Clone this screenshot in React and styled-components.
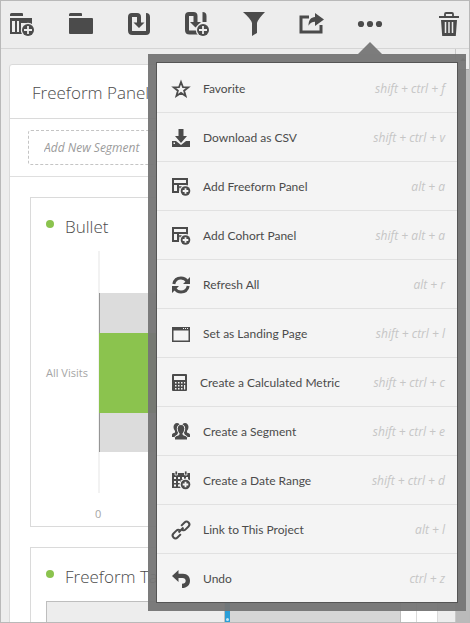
import React from "react";
import styled, { createGlobalStyle } from "styled-components";

const ink = "#4b4b4b";
const sans = '"Open Sans", "Noto Sans", sans-serif';

const Global = createGlobalStyle`
  * { box-sizing: border-box; }
  body { margin: 0; background: #ededed; color: ${ink}; font: 12px/16px ${sans}; }
  button, input { font: inherit; color: inherit; }
  h1, h2 { margin: 0; font-size: 17px; line-height: 24px; font-weight: 300; white-space: nowrap; }
`;

const Window = styled.div`
  position: relative;
  height: 100vh;
  overflow: hidden;
  display: flex;
  flex-direction: column;
  border: 1px solid #b9b9b9;
  background: #ededed;
`;

const Toolbar = styled.header`
  display: flex;
  align-items: center;
  gap: 34px;
  height: 48px;
  flex: none;
  padding: 0 8px 2px 9px;
  border-bottom: 1px solid #d5d5d5;
`;

const ToolButton = styled.button`
  display: flex;
  padding: 0;
  border: 0;
  background: none;
  cursor: pointer;
  margin-left: ${(p) => (p.$end ? "auto" : "0")};
`;

const Icon = styled.svg`
  display: block;
  flex: none;
  fill: ${ink};
`;

const Workspace = styled.main`
  flex: 1;
  min-height: 0;
  display: flex;
`;

const Scroller = styled.div`
  flex: 1;
  min-width: 0;
  overflow: hidden;
  padding: 15px 17px 0 8px;
`;

const ScrollTrack = styled.div`
  width: 14px;
  flex: none;
  display: flex;
  flex-direction: column;
  border-left: 1px solid #c8c8c8;
`;

const ScrollArrow = styled.div`
  height: 21px;
  display: flex;
  align-items: center;
  justify-content: center;
  border-bottom: 1px solid #aaa;
`;

const ScrollThumb = styled.div`
  flex: 1;
  background: #bababa;
`;

const Panel = styled.section`
  border: 1px solid #dadada;
  border-radius: 3px;
  background: #fff;
`;

const PanelHeader = styled.div`
  height: 54px;
  padding: 16px 22px 0;
  border-bottom: 1px solid #dadada;
`;

const SegmentBar = styled.div`
  padding: 11px 18px;
  border-bottom: 1px solid #dfdfdf;
`;

const SegmentInput = styled.input`
  display: block;
  width: 100%;
  height: 35px;
  padding: 0 15px;
  border: 1px dashed #c4c4c4;
  border-radius: 3px;
  background: #fff;
  font-style: italic;
  &::placeholder { color: #9b9b9b; opacity: 1; }
`;

const Cards = styled.div`
  display: flex;
  flex-direction: column;
  gap: 20px;
  padding: 20px;
`;

const Card = styled.article`
  border: 1px solid #dadada;
  padding: 0 15px;
`;

const CardHeader = styled.div`
  display: flex;
  align-items: center;
  gap: 11px;
  height: 53px;
  padding-top: 4px;
`;

const Dot = styled.span`
  width: 8px;
  height: 8px;
  margin-bottom: 5px;
  border-radius: 50%;
  background: #8bc34e;
`;

const Chart = styled.div`
  display: grid;
  grid-template-columns: 52px 1fr;
  color: #a5a5a5;
  font-size: 11px;
`;

const AxisLabel = styled.div`
  align-self: center;
  padding-top: 2px;
`;

const Plot = styled.div`
  height: 242px;
  padding: 42px 0 41px;
  border-left: 2px solid #f2f2f2;
`;

const Range = styled.div`
  height: 100%;
  margin-left: -1px;
  padding: 40px 0 39px;
  border-left: 1px solid #959595;
  background: #dcdcdc;
`;

const Measure = styled.div`
  height: 100%;
  margin-left: -1px;
  background: #8bc34e;
`;

const Tick = styled.div`
  grid-column: 2;
  height: 33px;
  padding-top: 13px;
  margin-left: -3px;
`;

const Grid = styled.div`
  display: flex;
  height: 60px;
  border: 1px solid #bebebe;
  background: #ededed;
`;

const NameColumn = styled.div`
  width: 178px;
  flex: none;
  border-right: 1px solid #bebebe;
`;

const ColumnHandle = styled.div`
  width: 5px;
  flex: none;
  padding: 16px 1px 0;
  background: #2a9fd8;
`;

const Grip = styled.div`
  height: 3px;
  border-radius: 50%;
  background: #c5e6f6;
`;

const ValueColumn = styled.div`
  flex: 1;
  background: #d6d6d6;
`;

const Popover = styled.nav`
  position: absolute;
  top: 53px;
  right: 3px;
  width: 318px;
  border: 8px solid rgba(117, 117, 117, 0.95);
  background: #f4f4f4;
  background-clip: padding-box;
  &::before {
    content: "";
    position: absolute;
    top: -20px;
    left: 202px;
    border: solid transparent;
    border-width: 0 12px 12px;
    border-bottom-color: #7c7c7c;
  }
`;

const Menu = styled.div`
  display: flex;
  flex-direction: column;
  border: 1px solid #555;
`;

const MenuItem = styled.button`
  display: flex;
  align-items: center;
  gap: 13px;
  height: 49px;
  padding: 2px 12px 0 15px;
  border: 0;
  border-top: 1px solid #e1e1e1;
  background: #f4f4f4;
  text-align: left;
  white-space: nowrap;
  cursor: pointer;
  &:first-child { border-top-color: #f4f4f4; }
`;

const Label = styled.span`
  font-family: Lato, ${sans};
`;

const Shortcut = styled.span`
  margin-left: auto;
  color: #c6c6c6;
  font-style: italic;
`;

const Plus = ({ x, y, r, bg }) => (
  <g>
    <circle cx={x} cy={y} r={r + 1.2} fill={bg} />
    <circle cx={x} cy={y} r={r} />
    <path d={`M${x - r + 2} ${y}h${2 * r - 4}M${x} ${y - r + 2}v${2 * r - 4}`} stroke={bg} strokeWidth="1.8" />
  </g>
);

const bar = "#ededed";
const row = "#f4f4f4";

const tools = [
  ["New project from template", <>
    <path d="M0 2.500Q0 1 1.500 1H12q1 0 1 1v2H0zM0 6h22v16H0z" />
    <path d="M2 9h3v11H2zM7 9h2v11H7zM11 11h6v3h-3v6h-3z" fill={bar} />
    <Plus x={18} y={18} r={6} bg={bar} />
  </>],
  ["Open project", <path d="M1 2.500Q1 1 2.500 1H13q1 0 1 1v2H1zM1 6h23q1 0 1 1v14q0 1-1 1H2q-1 0-1-1z" />],
  ["Save", <>
    <path d="M13 12V5q0-2-2-2H6Q4 3 4 5v13.500Q4 21 6.500 21H20q2 0 2-2V5" fill="none" stroke={ink} strokeWidth="4" />
    <path d="M20 1q4 0 4 4h-4zM7.500 10.500H18.500L13 16z" />
  </>],
  ["Save as", <>
    <path d="M11.500 11V4q0-2-2-2H5Q3 2 3 4v14q0 2.500 2.500 2.500H14M20.500 10V4" fill="none" stroke={ink} strokeWidth="4" />
    <path d="M18.500 0q4 0 4 4h-4zM6 10h11l-5.500 5.500z" />
    <Plus x={19} y={18} r={6} bg={bar} />
  </>],
  ["Filter", <path d="M1 0h22q-7 7-8 11v10l-5 3V11Q9 7 1 0z" />],
  ["Share", <>
    <path d="M9 5H1v15h20V13" fill="none" stroke={ink} strokeWidth="3" />
    <path d="M15 1l9 6.500-9 6.500v-4.200c-3 0-5 1.200-6.500 4C8.500 8 11 5.200 15 5z" stroke={bar} strokeWidth="2" paintOrder="stroke" />
  </>],
  ["More", <><circle cx="3" cy="12" r="3.100" /><circle cx="12" cy="12" r="3.100" /><circle cx="21" cy="12" r="3.100" /></>],
  ["Delete", <>
    <path d="M2 4h20v2H2zM4 8h16l-1.200 16H5.200z" />
    <path d="M8 4.500V2q0-1 1-1h6q1 0 1 1v2.500" fill="none" stroke={ink} strokeWidth="1.800" />
    <path d="M8.500 10v11M12 10v11M15.500 10v11" stroke={bar} strokeWidth="1.500" />
  </>],
];

const panelIcon = <>
  <path d="M1 1h14v5H1zM1 6v8h5V6" fill="none" stroke={ink} strokeWidth="2" />
  <path d="M15 5v4M7 9h5M8.500 9v4" fill="none" stroke={ink} strokeWidth="1.500" />
  <Plus x={13.5} y={13} r={4.800} bg={row} />
</>;

const items = [
  ["Favorite", "shift + ctrl + f",
    <path d="M9 2l2 5.200 5.300.2-4.200 3.300 1.500 5.200L9 12.900l-4.600 3 1.500-5.200-4.200-3.300L7 7.200z" fill="none" stroke={ink} strokeWidth="1.800" />],
  ["Download as CSV", "shift + ctrl + v",
    <path d="M6.500 0h5v7H15l-6 7-6-7h3.500zM0 12h4l5 4 5-4h4v6H0zM1.500 13.500v1.500H3v-1.500z" fillRule="evenodd" />],
  ["Add Freeform Panel", "alt + a", panelIcon],
  ["Add Cohort Panel", "shift + alt + a", panelIcon],
  ["Refresh All", "alt + r", <>
    <path d="M1.800 8C2.500 4.500 5.200 2 9 2q4 0 6.300 3.500M16.200 10c-.7 3.500-3.400 6-7.200 6q-4 0-6.300-3.500" fill="none" stroke={ink} strokeWidth="3" />
    <path d="M18 1v7h-7zM0 17v-7h7z" />
  </>],
  ["Set as Landing Page", "shift + ctrl + l", <>
    <path d="M0 2h18v15H0zM1.500 5.500v10h15v-10z" fillRule="evenodd" />
    <path d="M11 3.500h1M13 3.500h1M15 3.500h1" stroke={row} />
  </>],
  ["Create a Calculated Metric", "shift + ctrl + c", <>
    <rect x="0" y="0" width="15" height="17" rx="1" />
    <path d="M2 2h11v4H2z" fill={row} />
    <path d="M3 8h1.500v1.500H3zM6 8h1.500v1.500H6zM9 8h1.500v1.500H9zM3 11h1.500v1.500H3zM6 11h1.500v1.500H6zM9 11h1.500v1.500H9zM3 14h1.500v1.500H3zM6 14h1.500v1.500H6zM9 14h1.500v1.500H9zM12 8h1.200v1.500H12zM12 11h1.200v4.500H12z" fill={row} />
  </>, 15],
  ["Create a Segment", "shift + ctrl + e", <>
    <path d="M5 0c2 0 3 1.300 3 3.200L6 7v3l-2 4H0v-2.500q0-1 3-2V8Q1.500 6.500 1.500 4C1.500 2 3 0 5 0zM13 0c-2 0-3 1.300-3 3.200L12 7v3l2 4h4v-2.500q0-1-3-2V8q1.500-1.500 1.500-4C16.500 2 15 0 13 0z" />
    <path d="M9 1.500c2.500 0 3.700 1.700 3.700 4.200 0 2-.7 3.500-1.700 4.500v1.500q4.500 1 4.500 3V17h-13v-2.300q0-2 4.500-3v-1.500c-1-1-1.700-2.500-1.700-4.500 0-2.500 1.200-4.200 3.700-4.200z" stroke={row} strokeWidth="1" />
  </>],
  ["Create a Date Range", "shift + ctrl + d", <>
    <path d="M0 1h18v15H0z" />
    <path d="M3-1h2.500v4H3zM12.500-1H15v4h-2.500z" stroke={row} strokeWidth=".8" />
    <path d="M2 5h2v2H2zM6 5h2v2H6zM10 5h2v2h-2zM14 5h2v2h-2zM2 9h2v2H2zM6 9h2v2H6zM10 9h2v2h-2zM2 12.500h2v2H2zM6 12.500h2v2H6z" fill={row} />
    <Plus x={13.5} y={12.500} r={4.800} bg={row} />
  </>],
  ["Link to This Project", "alt + l",
    <g transform="rotate(-45 9 9)" fill="none" stroke={ink} strokeWidth="2">
      <path d="M6 11.800H1.200a2.800 2.800 0 0 1 0-5.600h4.100a2.800 2.800 0 0 1 2.700 2M12 6.200h4.800a2.800 2.800 0 0 1 0 5.600h-4.100a2.800 2.800 0 0 1-2.700-2M5.500 9h7" />
    </g>],
  ["Undo", "ctrl + z",
    <path d="M0 6l6.500-6v3.700h4.500c4.500 0 7 3 7 7 0 4.300-3 7.300-8 7.300v-4.200c2.500 0 3.700-1.200 3.700-3 0-1.900-1.200-2.900-3.200-2.900h-4V12z" />],
];

export default function App() {
  return (
    <Window>
      <Global />
      <Toolbar>
        {tools.map(([label, art]) => (
          <ToolButton key={label} aria-label={label} $end={label === "Delete"}>
            <Icon width="24" height="24" viewBox="0 0 24 24" overflow="visible">{art}</Icon>
          </ToolButton>
        ))}
      </Toolbar>
      <Workspace>
        <Scroller>
          <Panel>
            <PanelHeader><h1>Freeform Panel</h1></PanelHeader>
            <SegmentBar>
              <SegmentInput aria-label="Add New Segment" placeholder="Add New Segment" />
            </SegmentBar>
            <Cards>
              <Card>
                <CardHeader><Dot /><h2>Bullet</h2></CardHeader>
                <Chart>
                  <AxisLabel>All Visits</AxisLabel>
                  <Plot><Range><Measure /></Range></Plot>
                  <Tick>0</Tick>
                </Chart>
              </Card>
              <Card>
                <CardHeader><Dot /><h2>Freeform Table</h2></CardHeader>
                <Grid>
                  <NameColumn />
                  <ColumnHandle><Grip /></ColumnHandle>
                  <ValueColumn />
                </Grid>
              </Card>
            </Cards>
          </Panel>
        </Scroller>
        <ScrollTrack>
          <ScrollArrow>
            <Icon width="6" height="3" viewBox="0 0 6 3"><path d="M0 3l3-3 3 3z" /></Icon>
          </ScrollArrow>
          <ScrollThumb />
        </ScrollTrack>
      </Workspace>
      <Popover aria-label="More actions">
        <Menu>
          {items.map(([label, keys, art, width = 18]) => (
            <MenuItem key={label}>
              <Icon width={width} height="18" viewBox={`0 0 ${width} 18`} overflow="visible">{art}</Icon>
              <Label>{label}</Label>
              <Shortcut>{keys}</Shortcut>
            </MenuItem>
          ))}
        </Menu>
      </Popover>
    </Window>
  );
}
